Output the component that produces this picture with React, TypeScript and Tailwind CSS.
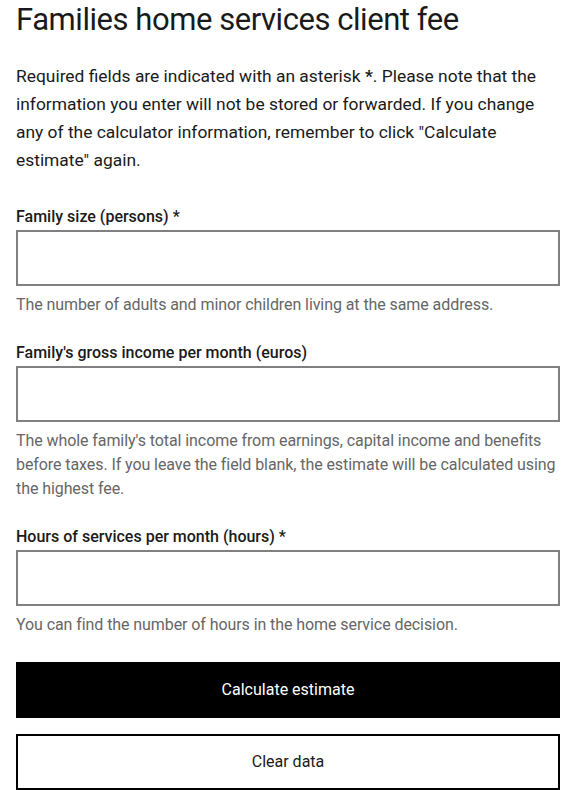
import React from "react";

function Field({ label, help }: { label: string; help: React.ReactNode }) {
  return (
    <div className="flex flex-col">
      <label className="text-[16px] leading-[24px] font-medium text-[#1a1a1a]">{label}</label>
      <input className="mt-[1px] h-[56px] w-full border-2 border-[#808080] bg-white px-3 outline-none" />
      <p className="mt-[7px] text-[16px] leading-[24px] tracking-[-0.08px] text-[#666666]">{help}</p>
    </div>
  );
}

export default function App() {
  return (
    <div
      className="min-h-[790px] bg-white px-4 text-[#1a1a1a]"
      style={{ fontFamily: "Roboto, 'Noto Sans', sans-serif" }}
    >
      <h1 className="mt-0 text-[31px] leading-[40px] font-normal tracking-[-0.45px] text-[#1a1a1a]">
        Families home services client fee
      </h1>
      <p className="mt-[22px] text-[17.4px] leading-[28px]">
        Required fields are indicated with an asterisk <span className="font-bold">*</span>. Please note that the information you enter will not be stored or forwarded. If you change any of the calculator information, remember to click "Calculate estimate" again.
      </p>
      <div className="mt-[31px] flex flex-col gap-6">
        <Field label="Family size (persons) *" help="The number of adults and minor children living at the same address." />
        <Field
          label="Family's gross income per month (euros)"
          help="The whole family's total income from earnings, capital income and benefits before taxes. If you leave the field blank, the estimate will be calculated using the highest fee."
        />
        <Field label="Hours of services per month (hours) *" help="You can find the number of hours in the home service decision." />
      </div>
      <button className="mt-[25px] flex h-[56px] w-full items-center justify-center bg-black text-[16px] text-white">
        Calculate estimate
      </button>
      <button className="mt-4 flex h-[56px] w-full items-center justify-center border-2 border-black bg-white text-[16px] text-[#1a1a1a]">
        Clear data
      </button>
    </div>
  );
}
